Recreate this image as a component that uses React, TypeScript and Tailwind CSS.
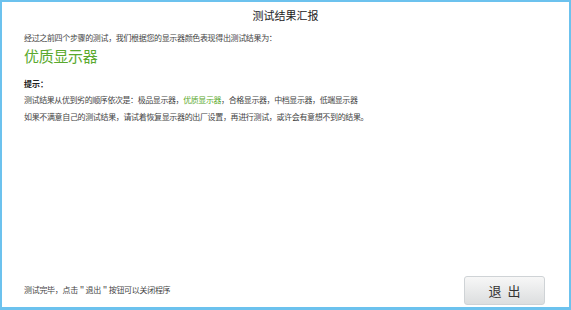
const App = () => {
  return (
    <div
      className="w-[571px] h-[310px] bg-white border-2 border-b-[3px] border-[#6cc2ee] flex flex-col text-[#333]"
      style={{ fontFamily: '"Noto Sans CJK SC", "Liberation Sans", sans-serif' }}
    >
      {/* Title */}
      <div className="h-[26px] flex items-center justify-center text-[11px] text-[#222] pt-[1px]">
        测试结果汇报
      </div>

      {/* Content */}
      <div className="flex-1 px-[22px] flex flex-col">
        <p className="text-[8px] leading-[10px] mt-[5px] text-[#444] tracking-[-0.35px]">
          经过之前四个步骤的测试，我们根据您的显示器颜色表现得出测试结果为：
        </p>
        <p className="text-[15px] leading-[18px] mt-[4px] text-[#5aa92d] tracking-[-0.3px]">优质显示器</p>

        <p className="text-[8px] leading-[10px] mt-[14px] font-bold text-[#222]">提示：</p>
        <p className="text-[8px] leading-[10px] mt-[6px] text-[#444] tracking-[-0.42px]">
          测试结果从优到劣的顺序依次是：极品显示器，
          <span className="text-[#5aa92d]">优质显示器</span>
          ，合格显示器，中档显示器，低端显示器
        </p>
        <p className="text-[8px] leading-[10px] mt-[7px] text-[#444] tracking-[-0.35px]">
          如果不满意自己的测试结果，请试着恢复显示器的出厂设置，再进行测试，或许会有意想不到的结果。
        </p>

        {/* Footer */}
        <div className="mt-auto flex items-center justify-between pb-[2px]">
          <p className="text-[8px] leading-[10px] text-[#444] mb-[2px] tracking-[-0.3px]">
            测试完毕，点击＂退出＂按钮可以关闭程序
          </p>
          <button className="w-[81px] h-[29px] mr-[2px] rounded-[3px] border border-[#cfd3d6] bg-gradient-to-b from-[#f7f7f7] to-[#dcdedf] text-[13px] text-[#333] tracking-[6px] pl-[6px]">
            退出
          </button>
        </div>
      </div>
    </div>
  );
};

export default App;
